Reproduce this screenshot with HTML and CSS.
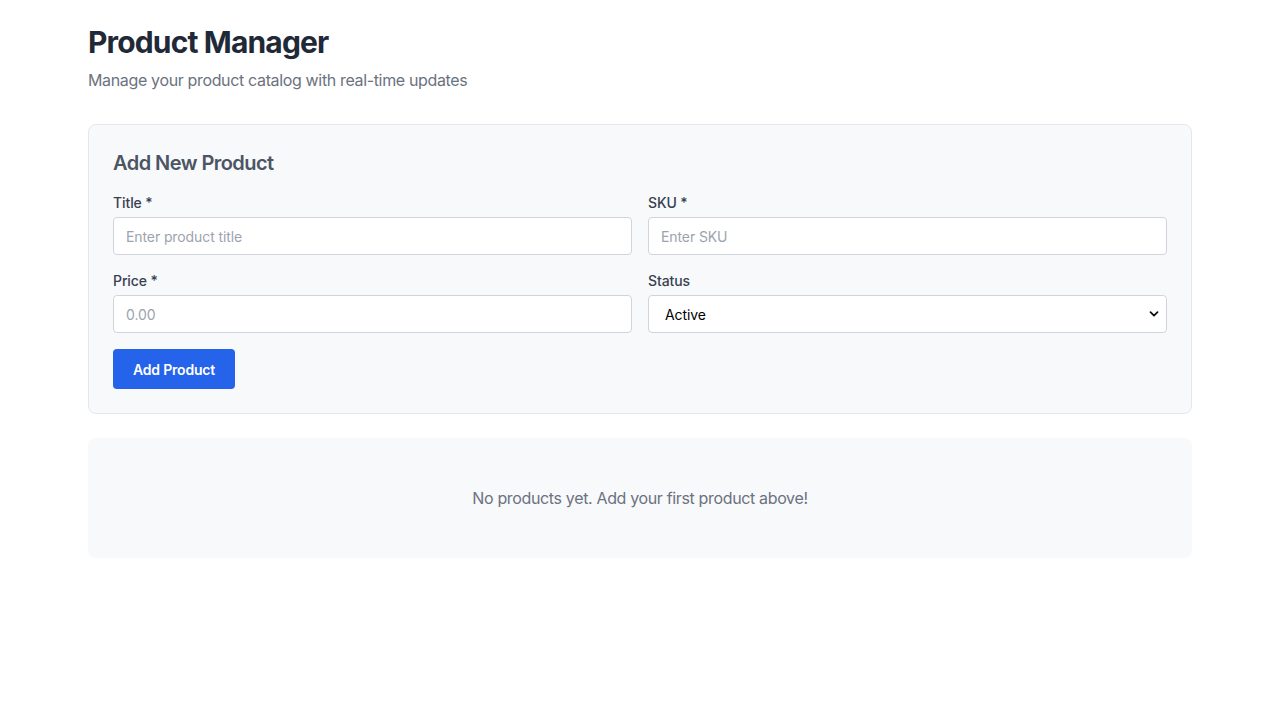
FILE: index.html
```html
<!DOCTYPE html>
<html lang="en">
<head>
<meta charset="utf-8">
<title>Product Manager</title>
<link rel="stylesheet" href="styles.css">
</head>
<body>
<main class="container">
  <header class="page-header">
    <h1 class="page-title">Product Manager</h1>
    <p class="page-subtitle">Manage your product catalog with real-time updates</p>
  </header>

  <section class="card form-card">
    <h2 class="card-title">Add New Product</h2>
    <form class="product-form">
      <div class="form-grid">
        <div class="field">
          <label class="field-label" for="title">Title *</label>
          <input class="field-input" id="title" type="text" placeholder="Enter product title">
        </div>
        <div class="field">
          <label class="field-label" for="sku">SKU *</label>
          <input class="field-input" id="sku" type="text" placeholder="Enter SKU">
        </div>
        <div class="field">
          <label class="field-label" for="price">Price *</label>
          <input class="field-input" id="price" type="text" placeholder="0.00">
        </div>
        <div class="field">
          <label class="field-label" for="status">Status</label>
          <div class="select-wrap">
            <select class="field-input field-select" id="status">
              <option>Active</option>
              <option>Draft</option>
              <option>Archived</option>
            </select>
            <svg class="select-chevron" viewBox="0 0 10 10" width="10" height="10" aria-hidden="true"><path d="M1.5 3.2 L5 6.7 L8.5 3.2" fill="none" stroke="#111" stroke-width="1.8" stroke-linecap="round" stroke-linejoin="round"/></svg>
          </div>
        </div>
      </div>
      <button class="btn-primary" type="button">Add Product</button>
    </form>
  </section>

  <section class="empty-state">
    <p class="empty-text">No products yet. Add your first product above!</p>
  </section>
</main>
</body>
</html>
```

FILE: styles.css
```css
* { box-sizing: border-box; }

html, body {
  margin: 0;
  padding: 0;
  background: #ffffff;
  font-family: Inter, "Noto Sans", "Liberation Sans", sans-serif;
  color: #1f2937;
}

.container {
  max-width: 1104px;
  margin: 0 auto;
  padding: 24px 0 40px;
}

.page-header {
  margin-bottom: 32px;
}

.page-title {
  margin: 0;
  font-size: 30px;
  line-height: 36px;
  font-weight: 700;
  color: #1f2937;
  letter-spacing: -0.85px;
}

.page-subtitle {
  margin: 8px 0 0;
  font-size: 16px;
  line-height: 24px;
  color: #6b7280;
  letter-spacing: -0.35px;
}

.card {
  background: #f8f9fb;
  border: 1px solid #e5e7eb;
  border-radius: 8px;
  padding: 24px;
}

.card-title {
  margin: 0 0 16px;
  font-size: 20px;
  line-height: 28px;
  font-weight: 600;
  color: #4b5563;
  letter-spacing: -0.55px;
}

.form-grid {
  display: grid;
  grid-template-columns: 1fr 1fr;
  column-gap: 16px;
  row-gap: 16px;
}

.field {
  display: flex;
  flex-direction: column;
  gap: 4px;
}

.field-label {
  font-size: 14px;
  line-height: 20px;
  font-weight: 500;
  color: #374151;
  letter-spacing: -0.1px;
}

.field-input {
  height: 38px;
  width: 100%;
  padding: 0 12px;
  border: 1px solid #d1d5db;
  border-radius: 4px;
  background: #ffffff;
  font-family: inherit;
  font-size: 14px;
  color: #111827;
  outline: none;
  letter-spacing: -0.1px;
}

.field-input::placeholder {
  color: #9ca3af;
}

.select-wrap {
  position: relative;
}

.field-select {
  appearance: none;
  -webkit-appearance: none;
  padding-left: 16px;
  color: #000000;
}

.select-chevron {
  position: absolute;
  right: 8px;
  top: 14px;
  pointer-events: none;
}

.btn-primary {
  margin-top: 16px;
  height: 40px;
  padding: 0 20px;
  border: none;
  border-radius: 4px;
  background: #2563eb;
  color: #ffffff;
  font-family: inherit;
  font-size: 14px;
  font-weight: 600;
  letter-spacing: -0.2px;
  cursor: pointer;
}

.empty-state {
  margin-top: 24px;
  background: #f8f9fb;
  border-radius: 8px;
  padding: 48px 24px;
  text-align: center;
}

.empty-text {
  margin: 0;
  font-size: 16px;
  line-height: 24px;
  color: #6b7280;
  letter-spacing: -0.35px;
}
```
